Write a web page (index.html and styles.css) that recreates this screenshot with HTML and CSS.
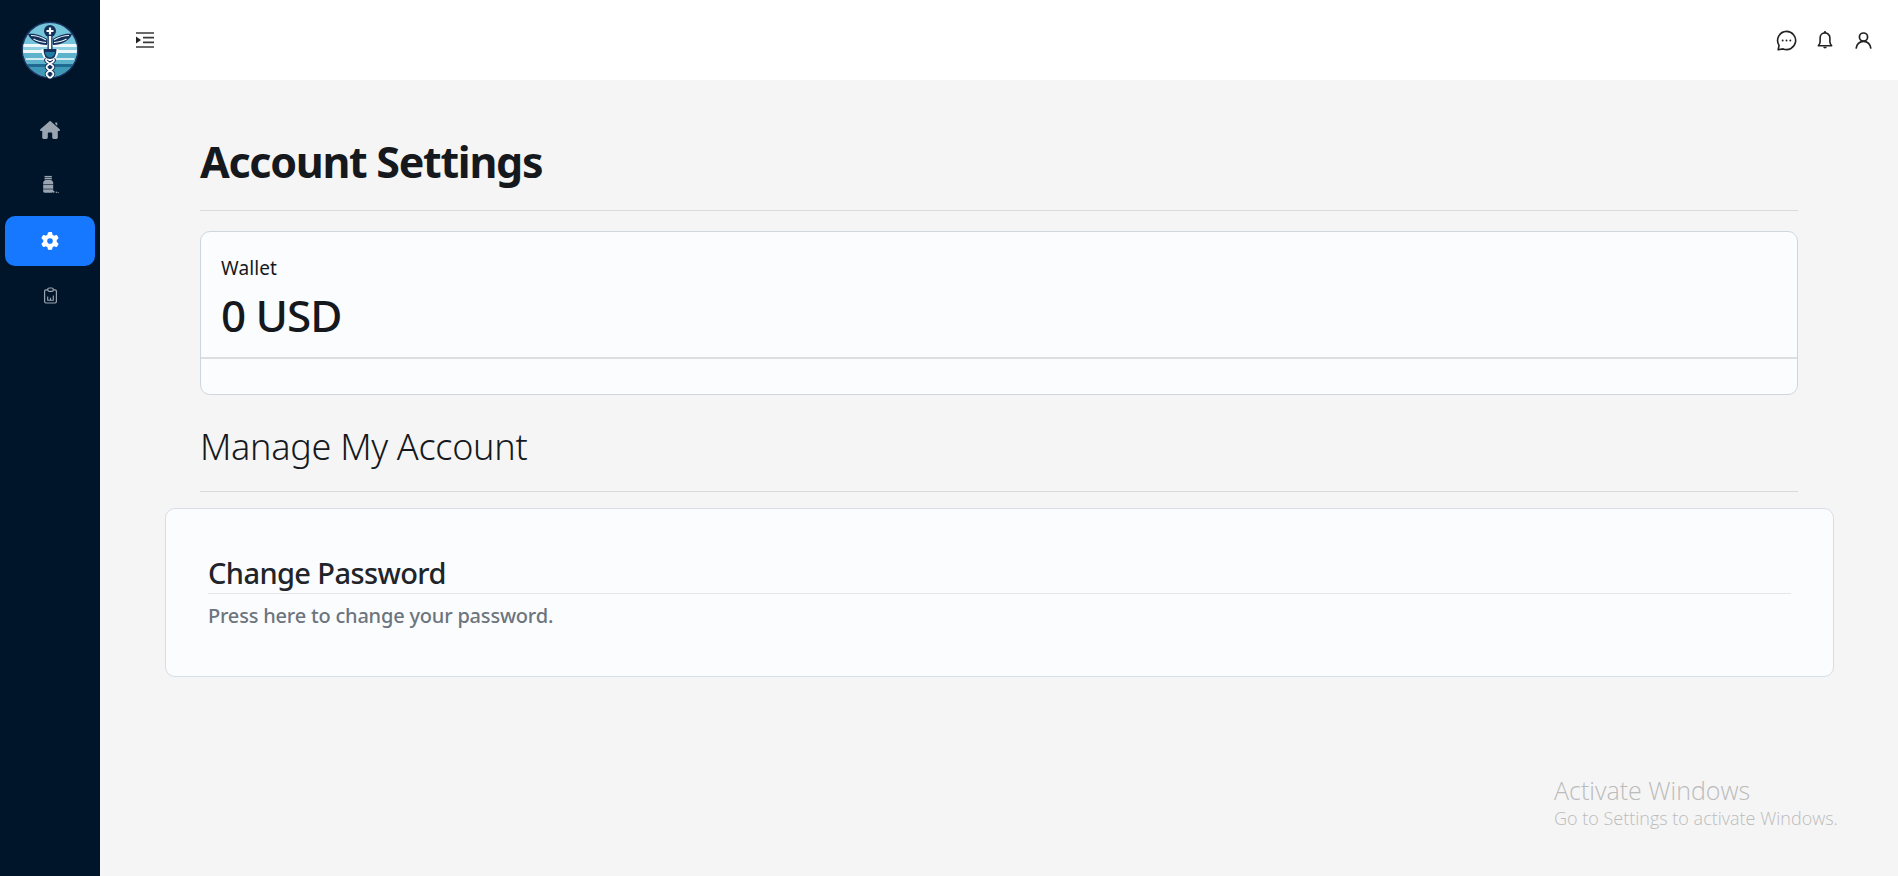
FILE: index.html
```html
<!DOCTYPE html>
<html lang="en">
<head>
<meta charset="utf-8">
<title>Account Settings</title>
<link rel="stylesheet" href="styles.css">
</head>
<body>
<div class="app">
  <aside class="sidebar">
    <div class="logo">
      <svg viewBox="0 0 60 60" width="60" height="60">
        <defs><clipPath id="lc"><circle cx="30" cy="30" r="27"/></clipPath></defs>
        <circle cx="30" cy="30" r="28.5" fill="#1a3560"/>
        <g clip-path="url(#lc)">
          <rect x="0" y="0" width="60" height="60" fill="#74c4da"/>
          <rect x="0" y="24" width="60" height="3" fill="#eef8fb"/>
          <rect x="0" y="27" width="60" height="3" fill="#8fd0e0"/>
          <rect x="0" y="30" width="60" height="3" fill="#eef8fb"/>
          <rect x="0" y="33" width="60" height="5" fill="#5db3cc"/>
          <rect x="6" y="38" width="48" height="2" fill="#cfeaf1"/>
          <rect x="0" y="40" width="60" height="4" fill="#5db3cc"/>
          <rect x="0" y="44" width="60" height="3" fill="#1f6a90"/>
          <rect x="0" y="47" width="60" height="13" fill="#3f98b6"/>
        </g>
        <path d="M27 19 C20 14 12 13 8 14 C10 20 18 25 27 25Z M33 19 C40 14 48 13 52 14 C50 20 42 25 33 25Z" fill="#14305a"/>
        <path d="M26 20 C21 17 15 15.500 11 15.500 M26 22.500 C21 22 16 20.500 13.500 19 M34 20 C39 17 45 15.500 49 15.500 M34 22.500 C39 22 44 20.500 46.500 19" stroke="#e8f6fa" stroke-width="1.100" fill="none"/>
        <circle cx="30" cy="11" r="6" fill="#14305a"/>
        <path d="M30 7.500v7M26.500 11h7" stroke="#fff" stroke-width="2.200"/>
        <path d="M30 15v16" stroke="#14305a" stroke-width="5"/>
        <path d="M30 16v15" stroke="#fff" stroke-width="2.400"/>
        <path d="M30 40v19" stroke="#14305a" stroke-width="2.500"/>
        <path d="M22.500 29h15c0 6-2.500 11-7.500 11s-7.500-5-7.500-11z" fill="#14305a"/>
        <path d="M22.500 29c0 6 2.500 11 7.500 11s7.500-5 7.500-11" fill="none" stroke="#fff" stroke-width="2"/>
        <path d="M25 32h10c-.4 3-2.200 5.500-5 5.500s-4.600-2.500-5-5.500z" fill="#1f7da3"/>
        <path d="M26.500 39c-3 3 7 5 7 8s-7 4-7 7c0 2 2.500 3 3.500 4M33.500 39c3 3-7 5-7 8s7 4 7 7c0 2-2.500 3-3.500 4" stroke="#14305a" stroke-width="3.600" fill="none"/>
        <path d="M26.500 39c-3 3 7 5 7 8s-7 4-7 7c0 2 2.500 3 3.500 4M33.500 39c3 3-7 5-7 8s7 4 7 7c0 2-2.500 3-3.500 4" stroke="#fff" stroke-width="1.800" fill="none"/>
      </svg>
    </div>
    <nav class="menu">
      <a class="item">
        <svg viewBox="0 0 576 512" width="20" height="18"><path fill="currentColor" d="M575.800 255.500c0 18-15 32.100-32 32.100h-32l.7 160.200c0 2.700-.2 5.400-.5 8.100V472c0 22.100-17.900 40-40 40H456c-1.100 0-2.200 0-3.300-.1-1.400.1-2.800.1-4.200.1H392c-22.100 0-40-17.900-40-40V360c0-17.700-14.300-32-32-32h-64c-17.700 0-32 14.300-32 32v112c0 22.100-17.900 40-40 40h-55.900c-1.500 0-3-.1-4.500-.2-1.200.1-2.400.2-3.600.2H104c-22.100 0-40-17.900-40-40V360c0-.9 0-1.900.1-2.800v-69.700H32c-18 0-32-14-32-32.100 0-9 3-17 10-24L266.400 8c7-7 15-8 22-8s15 2 21 7l255.400 224.500c8 7 12 15 11 24z"/><path fill="currentColor" d="M440 40h56v90l-56-50z"/></svg>
      </a>
      <a class="item">
        <svg viewBox="0 0 22 22" width="20" height="20"><g fill="currentColor"><rect x="5" y="1" width="8" height="1.600"/><rect x="5" y="3.200" width="8" height="1.600"/><path d="M6 5.500h6c1.500.8 2.500 1.800 2.500 3v9.500c0 1-.8 1.500-1.500 1.500H5c-.8 0-1.500-.6-1.500-1.500V8.500c0-1.200 1-2.200 2.500-3z"/><circle cx="15" cy="18.500" r="1.100"/><circle cx="18" cy="19" r=".8"/><circle cx="20" cy="19.300" r=".7"/></g><path d="M3.500 10.500h11M3.500 15.500h11" stroke="#001529" stroke-width=".7"/></svg>
      </a>
      <a class="item active">
        <svg viewBox="0 0 512 512" width="18" height="18"><path fill="currentColor" d="M495.900 166.600c3.200 8.700.5 18.400-6.400 24.600l-43.300 39.400c1.100 8.300 1.700 16.800 1.700 25.400s-.6 17.100-1.700 25.400l43.300 39.400c6.900 6.200 9.600 15.900 6.400 24.600-4.400 11.900-9.700 23.300-15.800 34.300l-4.700 8.100c-6.600 11-14 21.400-22.100 31.200-5.900 7.200-15.700 9.600-24.500 6.800l-55.700-17.700c-13.400 10.300-28.200 18.900-44 25.400l-12.500 57.100c-2 9.100-9 16.300-18.200 17.800-13.800 2.300-28 3.500-42.500 3.500s-28.700-1.200-42.500-3.500c-9.200-1.500-16.200-8.700-18.200-17.800l-12.500-57.100c-15.800-6.500-30.600-15.100-44-25.400l-55.600 17.800c-8.800 2.800-18.600.3-24.500-6.800-8.100-9.800-15.500-20.200-22.100-31.200l-4.700-8.100c-6.100-11-11.400-22.400-15.800-34.300-3.200-8.700-.5-18.400 6.400-24.600l43.300-39.400c-1.100-8.400-1.700-16.900-1.700-25.500s.6-17.100 1.700-25.400l-43.300-39.400c-6.900-6.200-9.600-15.900-6.400-24.600 4.400-11.900 9.700-23.300 15.800-34.300l4.700-8.100c6.600-11 14-21.400 22.100-31.200 5.900-7.200 15.700-9.600 24.500-6.800l55.700 17.700c13.400-10.300 28.200-18.900 44-25.400l12.500-57.100c2-9.100 9-16.300 18.200-17.800C227.300 1.200 241.500 0 256 0s28.700 1.200 42.500 3.500c9.200 1.500 16.200 8.700 18.200 17.800l12.500 57.100c15.800 6.500 30.600 15.100 44 25.400l55.700-17.700c8.800-2.800 18.600-.3 24.500 6.800 8.100 9.800 15.500 20.200 22.100 31.200l4.700 8.100c6.100 11 11.400 22.400 15.800 34.300zM256 336a80 80 0 1 0 0-160 80 80 0 1 0 0 160z"/></svg>
      </a>
      <a class="item item-clip">
        <svg viewBox="0 0 16 18" width="15" height="17"><g fill="none" stroke="currentColor" stroke-width="1.300"><path d="M5 3H3.200C2.300 3 1.700 3.600 1.700 4.500v11c0 .9.600 1.500 1.500 1.500h9.600c.9 0 1.500-.6 1.500-1.500v-11c0-.9-.6-1.500-1.500-1.500H11"/><rect x="5" y="1" width="6" height="3.500" rx="1.700"/></g><path d="M5 14V10M8 14V11.500M11 14V9M4.500 14h7" stroke="currentColor" stroke-width="1.200" fill="none"/></svg>
      </a>
    </nav>
  </aside>
  <div class="page">
    <header class="topbar">
      <svg class="toggle" viewBox="0 0 18 16" width="18" height="16"><path d="M0 1h18M7 5.700h11M7 10.300h11M0 15h18" stroke="#3a3a3a" stroke-width="1.700"/><path d="M0 4.500 5 8l-5 3.500z" fill="#222"/></svg>
      <div class="tools">
        <svg viewBox="0 0 22 22" width="21" height="21"><path d="M11 1.500a9.500 9.500 0 1 1-3.500 18.300L2.300 20.700l.9-4.600A9.500 9.500 0 0 1 11 1.500z" fill="none" stroke="#222" stroke-width="1.700" stroke-linejoin="round"/><circle cx="7" cy="11" r="1" fill="#222"/><circle cx="11" cy="11" r="1" fill="#222"/><circle cx="15" cy="11" r="1" fill="#222"/></svg>
        <svg viewBox="0 0 18 22" width="16" height="20"><path d="M9 3a5.500 5.500 0 0 0-5.500 5.500V13c0 2-.8 3.300-2 4.500h15c-1.200-1.200-2-2.500-2-4.500V8.500A5.500 5.500 0 0 0 9 3z" fill="none" stroke="#222" stroke-width="1.800" stroke-linejoin="round"/><path d="M9 1v2" stroke="#222" stroke-width="1.800"/><path d="M7 18.500a2 2 0 0 0 4 0z" fill="#222"/></svg>
        <svg class="tool-user" viewBox="0 0 20 20" width="17" height="17"><circle cx="10" cy="6" r="4.800" fill="none" stroke="#222" stroke-width="2"/><path d="M1.300 19.500c.4-4.800 3.900-8.500 8.700-8.500s8.300 3.700 8.700 8.500" fill="none" stroke="#222" stroke-width="2"/></svg>
      </div>
    </header>
    <main class="content">
      <h1 class="title">Account Settings</h1>
      <hr class="rule">
      <section class="wallet">
        <div class="wallet-body">
          <div class="wallet-label">Wallet</div>
          <div class="wallet-value">0 USD</div>
        </div>
        <div class="wallet-foot"></div>
      </section>
      <h2 class="subtitle">Manage My Account</h2>
      <hr class="rule rule-sub">
      <section class="action">
        <h3 class="action-title">Change Password</h3>
        <p class="action-text">Press here to change your password.</p>
      </section>
    </main>
  </div>
</div>
<div class="watermark">
  <div class="wm-title">Activate Windows</div>
  <div class="wm-text">Go to Settings to activate Windows.</div>
</div>
</body>
</html>
```

FILE: styles.css
```css
* { box-sizing: border-box; }
html, body { margin: 0; height: 100%; overflow: hidden; }
body { font-family: "Noto Sans", "Open Sans", sans-serif; color: #15191d; background: #f5f5f5; }
.app { display: flex; height: 876px; }
.sidebar { width: 100px; flex: none; background: #001529; display: flex; flex-direction: column; align-items: center; }
.logo { height: 100px; padding-top: 20px; }
.logo svg { display: block; }
.menu { width: 100%; display: flex; flex-direction: column; padding: 5px 5px 0; gap: 5px; margin-top: 0; }
.item { height: 50px; display: flex; align-items: center; justify-content: center; color: #9aa4b0; border-radius: 10px; }
.item.active { background: #1677ff; color: #fff; margin-top: 1px; }
.item-clip { margin-top: -1px; }
.page { flex: 1; min-width: 0; display: flex; flex-direction: column; }
.topbar { height: 80px; background: #fff; display: flex; align-items: center; justify-content: space-between; padding: 0 26px 0 36px; }
.tools { display: flex; align-items: center; gap: 20px; }
.tool-user { margin-left: 2px; }
.content { padding: 56px 100px 0 100px; }
.title { margin: 0; font-size: 43px; line-height: 52px; font-weight: 700; letter-spacing: -1.300px; }
.rule { border: 0; border-top: 1px solid #d9dadb; margin: 0; }
.title + .rule { margin-top: 22px; }
.wallet { margin-top: 20px; height: 164px; background: #fbfcfe; border: 1px solid #cfd6df; border-radius: 10px; display: flex; flex-direction: column; }
.wallet-body { height: 127px; padding: 24px 20px 0; border-bottom: 2px solid #dcdee2; }
.wallet-label { font-size: 19px; line-height: 25px; letter-spacing: .1px; }
.wallet-value { font-size: 44px; line-height: 54px; margin-top: 7px; letter-spacing: -1px; font-weight: 500; }
.subtitle { margin: 27px 0 0; font-size: 36px; line-height: 50px; font-weight: 300; letter-spacing: -.3px; }
.rule-sub { margin-top: 19px; }
.action { margin: 16px -36px 0 -35px; height: 169px; background: #fbfcfe; border: 1px solid #d6dde6; border-radius: 10px; padding: 44px 42px 0; }
.action-title { margin: 0; font-size: 29px; line-height: 40px; font-weight: 500; border-bottom: 1px solid #e4e6e9; letter-spacing: -.6px; color: #212529; }
.action-text { margin: 9px 0 0; font-size: 20px; line-height: 26px; font-weight: 500; color: #6c757d; letter-spacing: -.2px; }
.watermark { position: absolute; left: 1554px; top: 774px; color: #bcbcbc; font-family: "Open Sans", sans-serif; }
.wm-title { font-size: 25px; line-height: 32px; font-weight: 300; }
.wm-text { font-size: 18px; line-height: 25px; font-weight: 300; }
```
